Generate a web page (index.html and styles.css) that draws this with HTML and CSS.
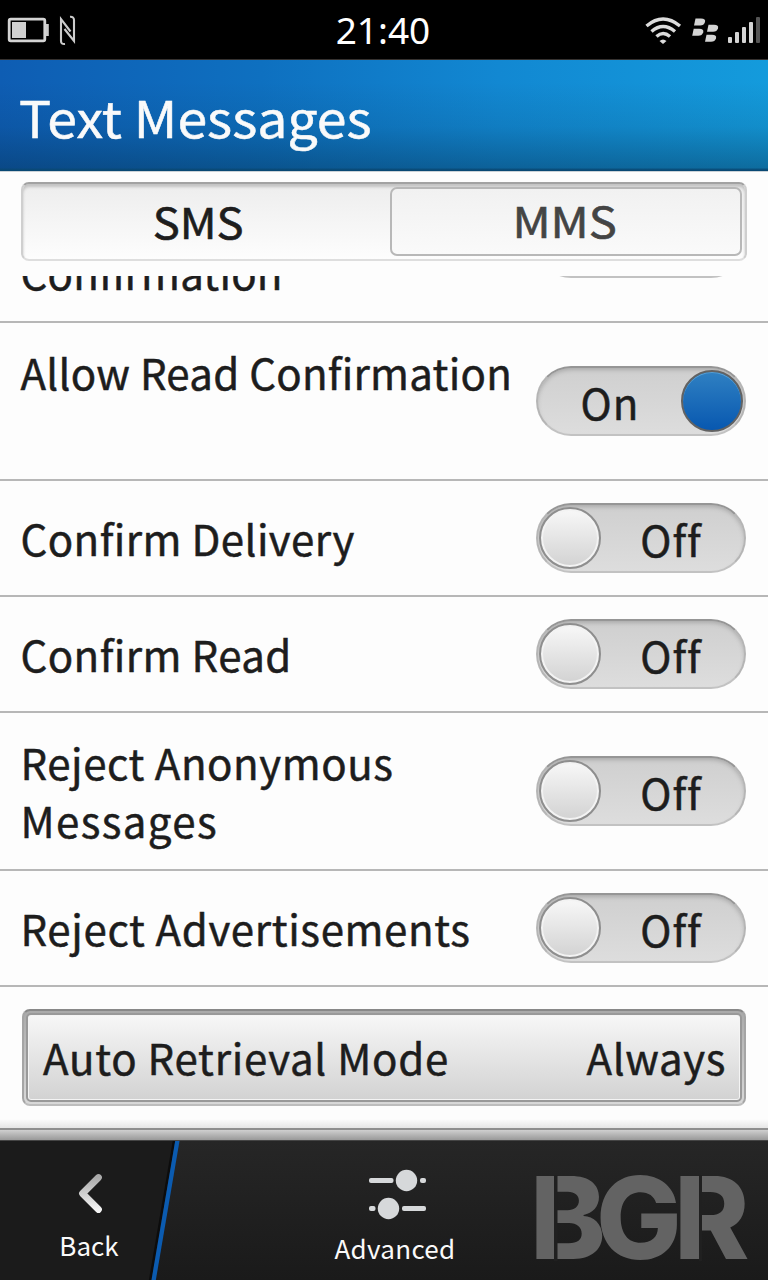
FILE: index.html
```html
<!DOCTYPE html>
<html lang="en">
<head>
<meta charset="utf-8">
<title>Text Messages</title>
<link rel="stylesheet" href="styles.css">
</head>
<body>
<div class="screen">
  <div class="status">
    <svg class="status-left" width="90" height="59" viewBox="0 0 90 59">
      <rect x="9.200" y="19.200" width="35.600" height="21.600" rx="1.500" fill="none" stroke="#d4d4d4" stroke-width="2.800"/>
      <rect x="12" y="22" width="14" height="16" fill="#d0d0d0"/>
      <path d="M46 24h2.800v12H46z" fill="#ccc"/>
      <path d="M65 44Q61 44.500 61 41V19L70.500 31.500M64.500 29L74 41V20Q74 16.500 70 16.800" fill="none" stroke="#ccc" stroke-width="2.100"/>
    </svg>
    <div class="clock">21:40</div>
    <svg class="status-right" width="128" height="59" viewBox="640 0 128 59">
      <g fill="none" stroke="#dcdcdc" stroke-width="3.400">
        <path d="M646.500 26Q663 12 680 26"/>
        <path d="M651.500 31.500Q663 21.500 675 31.500"/>
        <path d="M656.500 36.500Q663 30.500 670 36.500"/>
      </g>
      <path d="M659.500 41Q663 37.800 666.500 41L663 44z" fill="#dcdcdc"/>
      <g fill="#d4d4d4">
        <path id="seed" d="M695.500 18.500h5.500q5 0 4 3.500q-1 3.500-5 3.500h-6z"/>
        <use href="#seed" x="-1.800" y="10.200"/>
        <use href="#seed" x="13" y="6.300"/>
        <use href="#seed" x="11" y="16.300"/>
        <rect x="728" y="37" width="4" height="6" rx="1"/>
        <rect x="735" y="32" width="4" height="11" rx="1"/>
        <rect x="742" y="27" width="4" height="16" rx="1"/>
        <rect x="749" y="22" width="4" height="21" rx="1"/>
        <rect x="756" y="17" width="4" height="26" rx="1" fill="#555"/>
      </g>
    </svg>
  </div>
  <header class="header"><h1 class="title">Text Messages</h1></header>
  <div class="tabs-area">
    <div class="tabs">
      <div class="tab"><span class="t-sms">SMS</span></div>
      <div class="tab tab-raised"><span class="t-mms">MMS</span></div>
    </div>
  </div>
  <main class="list">
    <div class="row tall first"><div class="label"><br><span class="l0">Confirmation</span></div><div class="toggle off"><span class="knob"></span></div></div>
    <div class="row tall"><div class="label"><span class="l1">Allow Read Confirmation</span><br>&nbsp;</div><div class="toggle on"><span class="value">On</span><span class="knob"></span></div></div>
    <div class="row"><div class="label"><span class="l2">Confirm Delivery</span></div><div class="toggle off"><span class="knob"></span><span class="value">Off</span></div></div>
    <div class="row"><div class="label"><span class="l3">Confirm Read</span></div><div class="toggle off"><span class="knob"></span><span class="value">Off</span></div></div>
    <div class="row tall"><div class="label"><span class="l4">Reject Anonymous</span><br><span class="l5">Messages</span></div><div class="toggle off"><span class="knob"></span><span class="value">Off</span></div></div>
    <div class="row"><div class="label"><span class="l6">Reject Advertisements</span></div><div class="toggle off"><span class="knob"></span><span class="value">Off</span></div></div>
    <div class="picker"><div class="picker-face"><span class="p1">Auto Retrieval Mode</span><span class="p2">Always</span></div></div>
  </main>
  <div class="shelf"></div>
  <footer class="bar">
    <svg class="slash" width="190" height="140" viewBox="0 0 190 140">
      <path d="M0 0H175L151 140H0z" fill="#1b1b1b"/>
      <path d="M174 0L150 140" stroke="#0c0c0c" stroke-width="2.500"/>
      <path d="M177.500 -1L153.500 140" stroke="#0b5bb0" stroke-width="4.300"/>
    </svg>
    <div class="action back">
      <svg width="30" height="46" viewBox="0 0 30 46">
        <defs><linearGradient id="chev" x1="0" y1="0" x2="0" y2="1"><stop offset="0" stop-color="#aaa"/><stop offset="1" stop-color="#f4f4f4"/></linearGradient></defs>
        <path d="M22.500 6.500L6.500 22.500L22.500 38.500" fill="none" stroke="url(#chev)" stroke-width="6.800" stroke-linecap="round" stroke-linejoin="round"/>
      </svg>
      <span class="b1">Back</span>
    </div>
    <div class="action advanced">
      <svg width="60" height="52" viewBox="0 0 60 52" fill="#d6d8da">
        <rect x="2" y="9" width="24.500" height="5" rx="2"/><circle cx="39.500" cy="11.500" r="10.700"/><rect x="53" y="9" width="6" height="5" rx="2"/>
        <rect x="2" y="37" width="6.500" height="5" rx="2"/><circle cx="21.500" cy="39.500" r="10.700"/><rect x="35" y="37" width="24" height="5" rx="2"/>
      </svg>
      <span class="b2">Advanced</span>
    </div>
    <svg class="brand" width="252" height="140" viewBox="516 0 252 140">
      <text class="brand-text" x="530 596 674" y="118">BGR</text>
      <rect x="554" y="34" width="3.500" height="86" fill="#202020"/>
      <rect x="699" y="34" width="3" height="86" fill="#202020"/>
    </svg>
  </footer>
</div>
</body>
</html>
```
FILE: styles.css
```css
* { box-sizing: border-box; }
body { margin: 0; background: #fdfdfd; font-family: "Noto Sans CJK SC", "Noto Sans", sans-serif; color: #1d1d1d; }
.screen { width: 768px; height: 1280px; overflow: hidden; display: flex; flex-direction: column; background: #fdfdfd; }
.status { height: 60px; flex: none; background: #000; border-bottom: 1px solid #363230; display: grid; grid-template-columns: 128px 1fr 128px; }
.clock { color: #fff; font: 37px/60px "Noto Sans", sans-serif; text-align: center; padding-right: 2px; }
.header { height: 112px; flex: none; border-bottom: 1px solid #cbd2d7; padding-left: 19px;
  background: linear-gradient(180deg, rgba(5,45,75,0) 20%, rgba(5,45,75,.12) 60%, rgba(5,45,75,.42) 97%, #094873 99%), linear-gradient(90deg, #0e5db3 0, #0e70c0 34%, #1288d2 65%, #149bdc 100%); }
.title { margin: 0; font-size: 50px; line-height: 112px; font-weight: 400; color: #fafafa; white-space: nowrap; transform: scaleX(1.072); transform-origin: 0 50%; -webkit-text-stroke: .5px #fafafa; width: 500px; }
.tabs-area { height: 104px; flex: none; padding: 10px 21px 0; font-size: 42px; line-height: 66px; -webkit-text-stroke: .6px; }
.tabs { height: 79px; border: 2px solid #cfcfcf; border-top-color: #a2a2a2; border-bottom-color: #dedede; border-radius: 8px; display: grid; grid-template-columns: 367px 352px; padding-top: 3px; background: linear-gradient(#ededed, #fdfdfd); box-shadow: inset 0 3px 3px #c2c2c2; }
.tab { text-align: center; height: 69px; padding-right: 16px; }
.tab span { display: inline-block; line-height: 68px; }
.t-sms { transform: scaleX(1.08); }
.t-mms { transform: scaleX(1.12); }
.tab-raised { color: #444; border: 2px solid #b8b8b8; border-radius: 7px; background: linear-gradient(#f1f1f1, #fafafa); padding-right: 2px; line-height: 62px; }
.tab-raised span { line-height: 62px; }
.list { height: 852px; flex: none; overflow: hidden; font-size: 42px; line-height: 58px; background: linear-gradient(#fdfdfd 843px, #e6e6e6 852px); -webkit-text-stroke: .5px; }
.row { height: 116px; border-bottom: 2px solid #b7b7b7; padding: 0 22px 0 20.5px; display: flex; align-items: center; justify-content: space-between; }
.tall { height: 158px; }
.first { margin-top: -111px; }
.label { white-space: nowrap; }
.l0 { letter-spacing: .2px; }
.l1 { letter-spacing: .27px; }
.l2 { letter-spacing: .42px; }
.l3 { letter-spacing: .42px; }
.l4 { letter-spacing: .55px; }
.l5 { letter-spacing: 1.4px; }
.l6 { letter-spacing: .65px; }
.p1 { letter-spacing: .75px; }
.p2 { letter-spacing: .6px; }
.toggle { width: 210px; height: 70px; flex: none; border-radius: 35px; border: 2px solid #b5b5b5; border-top-color: #969696; border-bottom-color: #c2c2c2; background: linear-gradient(#cfcfcf, #dddddd); box-shadow: inset 0 3px 4px -1px #aaa; display: flex; align-items: center; padding: 0 1px; }
.knob { width: 62px; height: 62px; flex: none; border-radius: 50%; border: 2px solid #8e8e8e; background: linear-gradient(#f8f8f8, #d2d2d2); box-shadow: inset 0 0 0 2px #f3f3f3; }
.on .knob { border-color: #626262; background: linear-gradient(#2f80c2, #0858b0); box-shadow: inset 0 1px 0 #58a0d5; }
.value { flex: 1; text-align: center; padding-top: 1px; letter-spacing: 1px; }
.off .value { padding-right: 2px; }
.picker { margin: 22px 22px 0; height: 97px; border-radius: 8px; border: 2px solid #a5a5a5; border-top-color: #888; border-bottom-color: #bdbdbd; background: linear-gradient(#aaa, #d8d8d8); padding: 2px; }
.picker-face { height: 89px; border-radius: 5px; border: 2px solid #999; background: linear-gradient(#f7f7f7, #d2d2d2); box-shadow: inset 0 0 0 1px #f4f4f4; padding: 0 14px 2px 15px; display: flex; justify-content: space-between; align-items: center; }
.shelf { height: 12px; flex: none; border-top: 2px solid #8f8f8f; background: linear-gradient(#cfcfcf, #999); }
.bar { height: 140px; flex: none; position: relative; background: linear-gradient(#262626, #1a1a1a); border-top: 1px solid #444; display: grid; grid-template-columns: 178px 434px; color: #fafafa; font-size: 26px; line-height: 34px; }
.slash { position: absolute; left: 0; top: 0; }
.action { display: flex; flex-direction: column; align-items: center; position: relative; }
.back { padding-top: 30px; }
.back span { margin-top: 11px; }
.back svg { margin-left: 4px; }
.advanced { padding-top: 28px; }
.advanced svg { margin-left: 4px; }
.advanced span { margin-top: 10px; letter-spacing: .3px; }
.brand { position: absolute; right: 0; top: 0; }
.brand-text { font: 800 114px Inter, sans-serif; fill: #636363; }
```
